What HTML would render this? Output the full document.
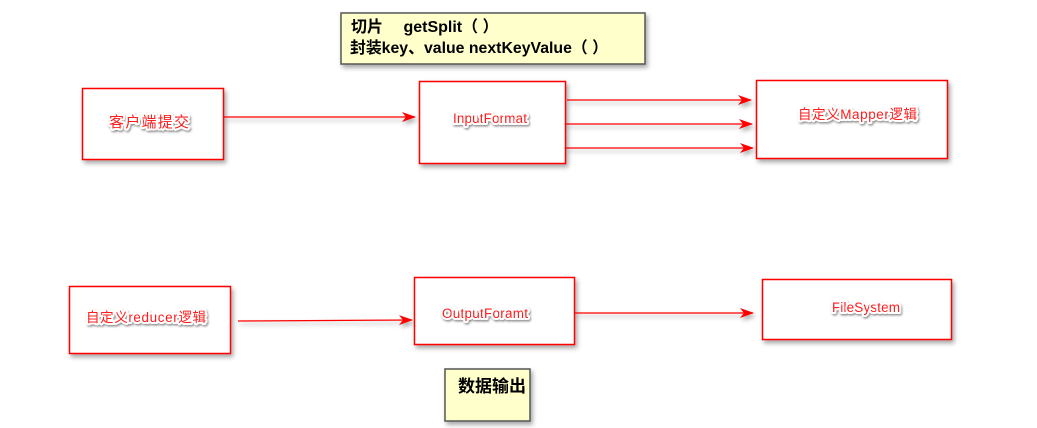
<!DOCTYPE html>
<html><head><meta charset="utf-8"><style>
html,body{margin:0;padding:0;background:#fff;width:1037px;height:428px;overflow:hidden}
svg{display:block}
.lbl{font-family:"Liberation Sans","Noto Sans CJK SC",sans-serif;font-size:13.5px;fill:#ff1a1a;stroke:#fff;stroke-width:4px;paint-order:stroke;stroke-linejoin:round}
.note{font-family:"Liberation Sans","Noto Sans CJK SC",sans-serif;font-size:16px;font-weight:bold;fill:#000}
</style></head><body>
<svg width="1037" height="428" xmlns="http://www.w3.org/2000/svg">
<defs>
<filter id="sh" x="-10%" y="-10%" width="130%" height="140%"><feDropShadow dx="2" dy="3" stdDeviation="2.5" flood-color="#000" flood-opacity="0.35"/></filter>
<filter id="ts" x="-10%" y="-30%" width="120%" height="170%"><feDropShadow dx="1" dy="1.5" stdDeviation="1" flood-color="#000" flood-opacity="0.45"/></filter>
<marker id="ar" markerWidth="14" markerHeight="10" refX="13" refY="5" orient="auto" markerUnits="userSpaceOnUse"><path d="M0,0 L14,5 L0,10 L4,5 Z" fill="#ff0000"/></marker>
</defs>
<g filter="url(#sh)">
<rect x="341" y="13" width="304" height="51" fill="#ffffcc" stroke="#555" stroke-width="1.5"/>
<rect x="445" y="369" width="85" height="52" fill="#ffffcc" stroke="#555" stroke-width="1.5"/>
</g>
<g fill="#fff" stroke="#ff0000" stroke-width="1.5" filter="url(#sh)">
<rect x="82.5" y="88.5" width="141" height="71"/>
<rect x="419.5" y="81.5" width="146" height="82"/>
<rect x="756.5" y="80.5" width="191" height="78"/>
<rect x="69.5" y="286.5" width="161" height="67"/>
<rect x="414.5" y="277.5" width="160" height="67"/>
<rect x="762.5" y="279.5" width="189" height="60"/>
</g>
<g stroke="#ff0000" stroke-width="1.3" marker-end="url(#ar)" filter="url(#sh)">
<line x1="224" y1="117" x2="415" y2="117"/>
<line x1="567" y1="100" x2="751" y2="100"/>
<line x1="566" y1="124" x2="752" y2="124"/>
<line x1="566" y1="148" x2="753" y2="148"/>
<line x1="238" y1="321" x2="412" y2="320"/>
<line x1="575" y1="313" x2="753" y2="313"/>
</g>
<text class="note" x="351" y="32">切片　 getSplit（ ）</text>
<text class="note" x="350" y="53" textLength="258" lengthAdjust="spacingAndGlyphs">封装key、value  nextKeyValue（ ）</text>
<text class="note" x="458" y="392" style="font-size:17px">数据输出</text>
<g filter="url(#ts)">
<text class="lbl" x="109" y="127" style="font-size:15px" textLength="80">客户端提交</text>
<text class="lbl" x="453" y="123" textLength="74">InputFormat</text>
<text class="lbl" x="798" y="119" textLength="119">自定义Mapper逻辑</text>
<text class="lbl" x="86" y="322" textLength="120">自定义reducer逻辑</text>
<text class="lbl" x="442" y="318" textLength="86">OutputForamt</text>
<text class="lbl" x="832" y="312" textLength="68">FileSystem</text>
</g>
</svg>
</body></html>
